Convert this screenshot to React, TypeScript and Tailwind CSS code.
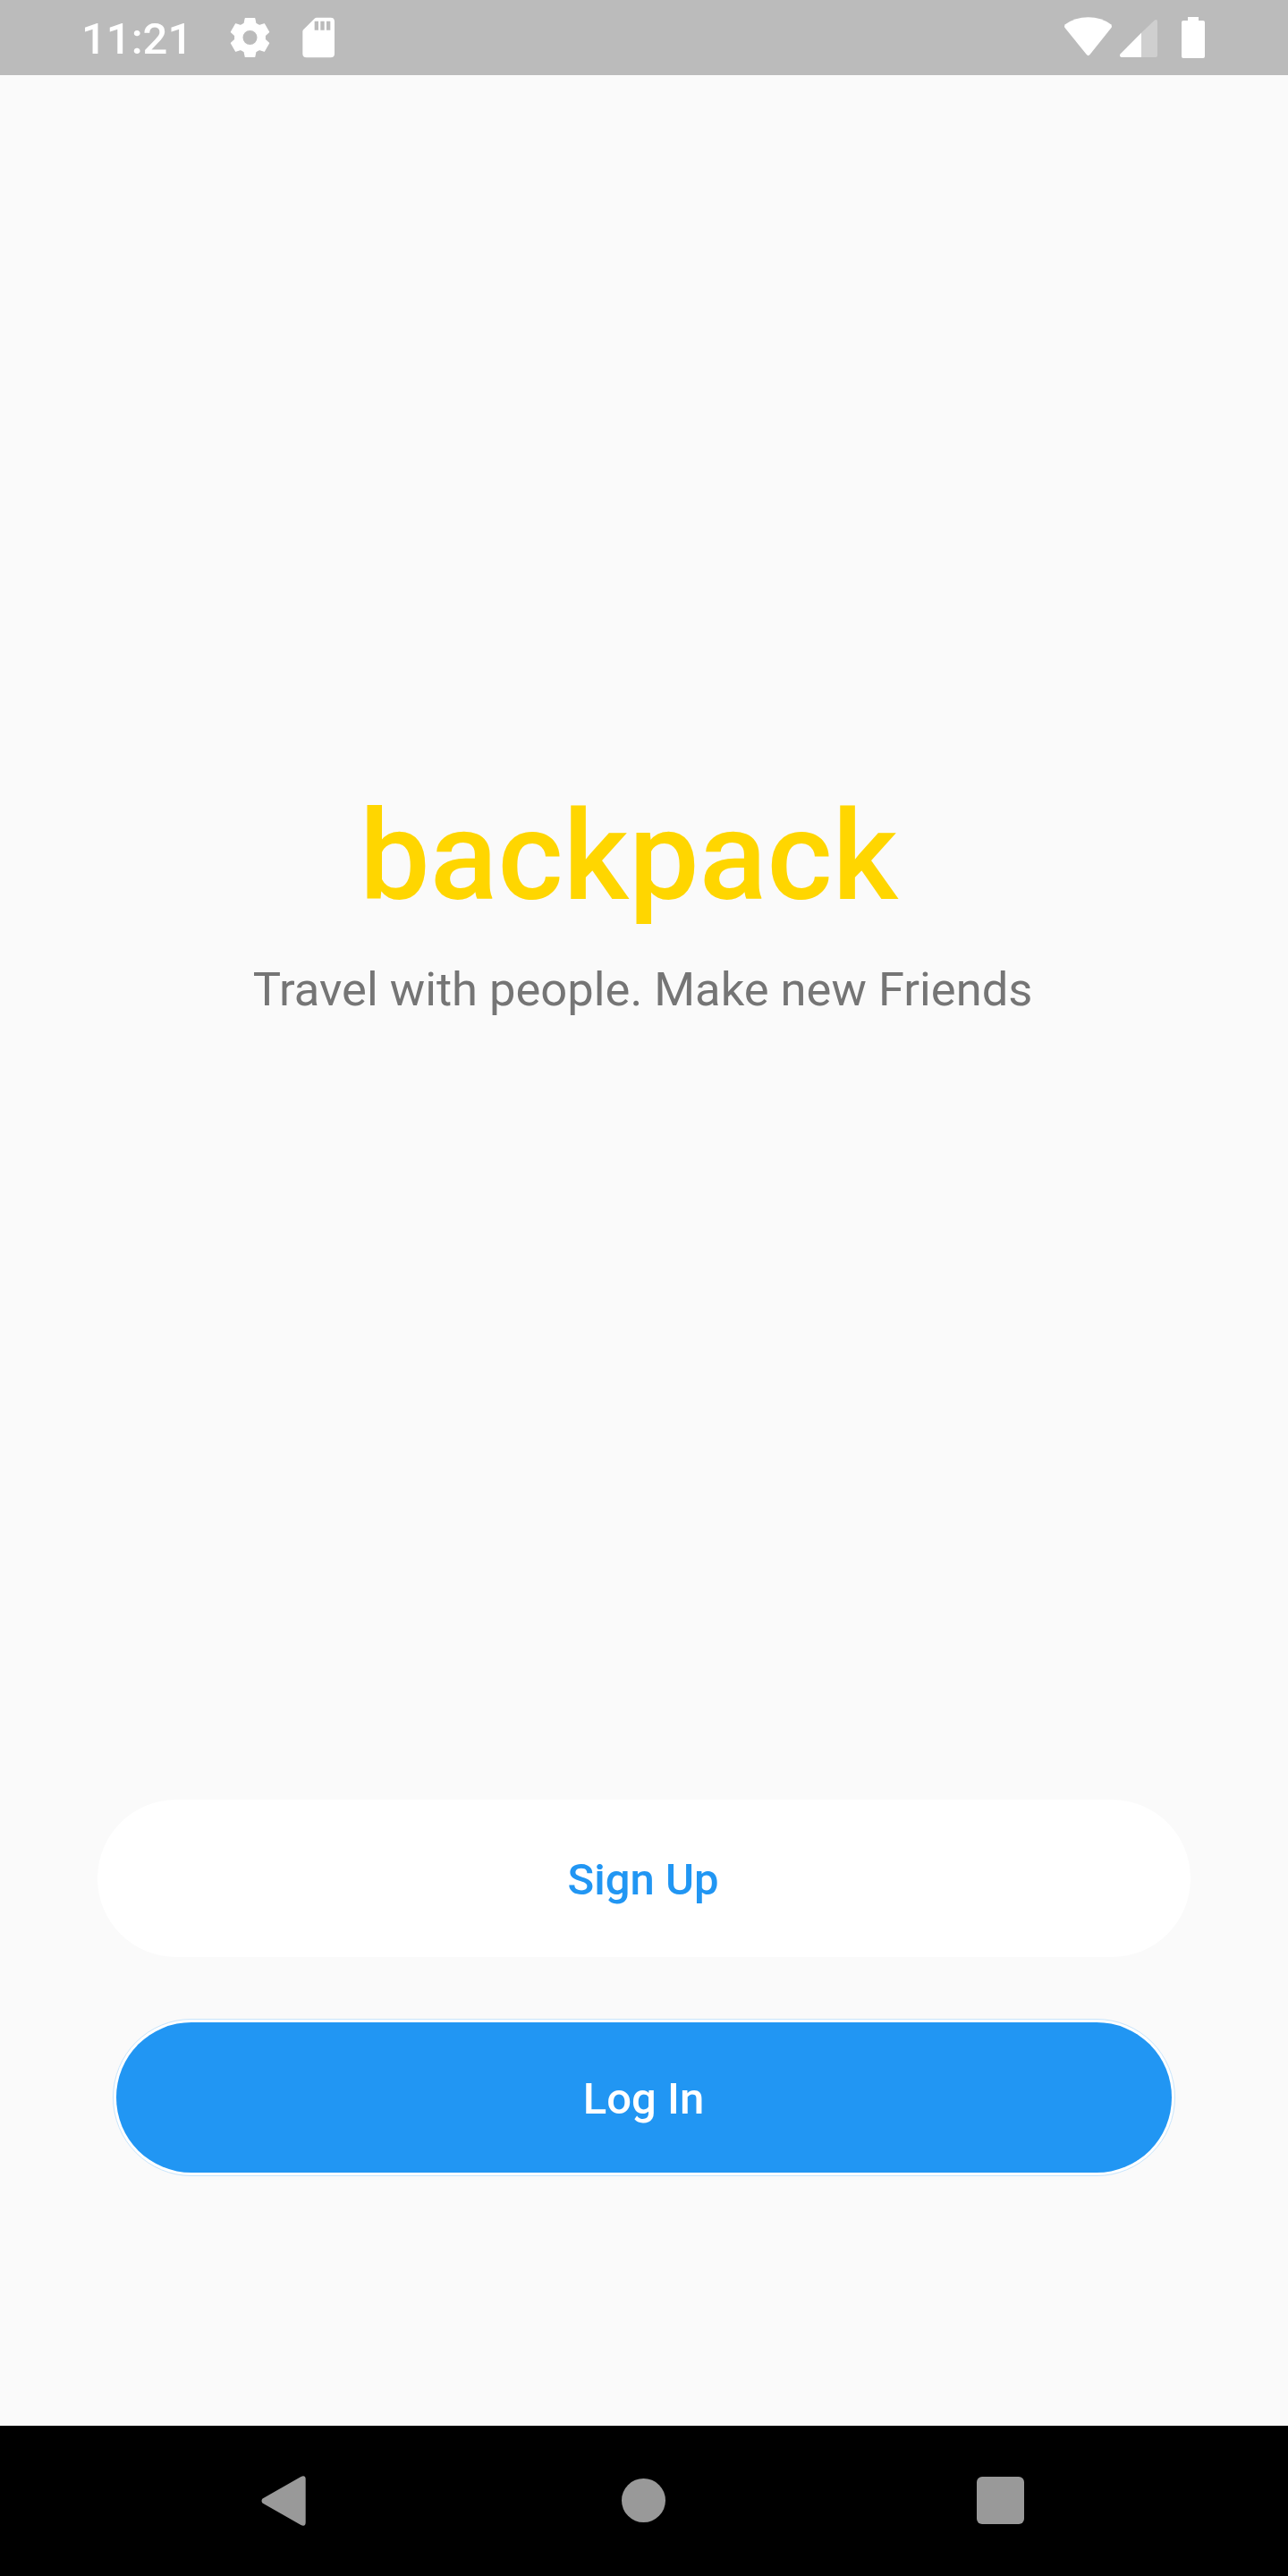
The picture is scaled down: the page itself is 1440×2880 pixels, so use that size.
const gearAngles = [0, 60, 120, 180, 240, 300];

function gearPath() {
  const tooth: [number, number][] = [[-19, -47], [-15.5, -64], [15.5, -64], [19, -47]];
  const points = gearAngles.flatMap((angle) => {
    const r = (angle * Math.PI) / 180;
    return tooth.map(([x, y]) => `${(x * Math.cos(r) - y * Math.sin(r)).toFixed(2)} ${(x * Math.sin(r) + y * Math.cos(r)).toFixed(2)}`);
  });
  return `M${points.join("L")}ZM-26 0a26 26 0 1 0 52 0a26 26 0 1 0 -52 0Z`;
}

function StatusBar() {
  return (
    <header className="flex h-[84px] shrink-0 items-center justify-between bg-[#bbbbbb] pr-[93px] pl-[91px] text-white">
      <div className="flex items-center">
        <span className="w-[119px] pt-[4px] text-[49px] leading-[58px] font-medium whitespace-nowrap">11:21</span>
        <svg className="ml-[47px] h-[46px] w-[45px]" viewBox="-67.5 -69 135 138" fill="white" stroke="white" strokeWidth="4" strokeLinejoin="round">
          <path fillRule="evenodd" d={gearPath()} />
        </svg>
        <svg className="ml-[36px] h-[46px] w-[36px]" viewBox="775 58 108 138" fill="white">
          <path fillRule="evenodd" d="M823 60H870Q883 60 883 73V181Q883 194 870 194H789Q776 194 776 181V107Q776 103 779 100L816 63Q819 60 823 60ZM816 72V102H829V72ZM836 72V102H849V72ZM856 72V102H869V72Z" />
        </svg>
      </div>
      <svg className="h-[48px] w-[158px]" viewBox="57 54 474 144" fill="white">
        <path d="M61 92Q58 87 63 82Q96 58 140 58Q184 58 216 82Q221 87 218 92L145 184Q140 189 135 184Z" />
        <path fillOpacity="0.3" d="M318 110L362 68Q372 63 372 73V186Q372 192 366 192H318Z" />
        <path d="M318 110V192H251Q243 190 248 181Z" />
        <path d="M474 57H510V69H525Q531 69 531 75V189Q531 195 525 195H459Q453 195 453 189V75Q453 69 459 69H474Z" />
      </svg>
    </header>
  );
}

function NavigationBar() {
  return (
    <nav className="flex h-[168px] shrink-0 items-center bg-black pb-[1px] pl-[292px]">
      <svg className="h-[56px] w-[50px]" viewBox="0 0 50 56" fill="#999999">
        <path d="M1.5 25.5L44 1.2Q49.7 -1.5 49.7 4V52Q49.7 57.5 44 54.8L1.5 30.5Q-0.5 28 1.5 25.5Z" />
      </svg>
      <div className="ml-[353px] size-[49px] rounded-full bg-[#999999]" />
      <div className="ml-[347.5px] size-[53px] rounded-[6px] bg-[#999999]" />
    </nav>
  );
}

export default function App() {
  return (
    <div className="flex h-[2880px] w-[1440px] flex-col bg-[#fafafa] font-['Roboto',sans-serif]">
      <StatusBar />
      <main className="flex flex-1 flex-col items-center">
        <h1 className="mt-[791px] mr-[34px] text-[140px] leading-[164px] font-medium tracking-[0.2px] whitespace-nowrap text-[#ffd600]">backpack</h1>
        <p className="mt-[36px] mr-[3px] text-[52.5px] leading-[62px] whitespace-nowrap text-[#757575]">Travel with people. Make new Friends</p>
        <button className="mt-[875px] h-[176px] w-[1222px] rounded-full bg-white pt-[3px] pr-[2px] text-[49px] leading-[58px] font-medium text-[#2196f3]">Sign Up</button>
        <button className="mt-[69px] h-[176px] w-[1188px] rounded-full border border-[#c8e5fc] bg-white p-[3px]">
          <span className="flex size-full items-center justify-center rounded-full bg-[#2196f3] pt-[3px] pr-[1px] text-[49px] leading-[58px] font-medium text-white">Log In</span>
        </button>
      </main>
      <NavigationBar />
    </div>
  );
}
